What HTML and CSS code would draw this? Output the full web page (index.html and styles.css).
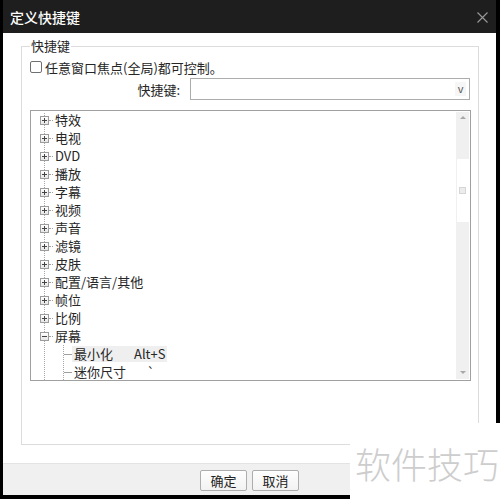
FILE: index.html
```html
<!DOCTYPE html>
<html lang="zh-CN">
<head>
  <meta charset="UTF-8" />
  <title>定义快捷键</title>
  <link rel="stylesheet" href="styles.css">
</head>
<body>
  <div class="window">
    <div class="titlebar">
      <span class="title">定义快捷键</span>
      <span class="close">
        <svg width="11" height="11" viewBox="0 0 11 11"><path d="M0.5 0.5L10.5 10.5M10.5 0.5L0.5 10.5" stroke="#9a9a9a" stroke-width="1.1" fill="none"/></svg>
      </span>
    </div>

    <div class="dialog-body">
      <div class="group">
        <span class="group-title">快捷键</span>

        <label class="check-row"><span class="checkbox"></span>任意窗口焦点(全局)都可控制。</label>

        <div class="hotkey-row">
          <span class="hotkey-label">快捷键:</span>
          <div class="combo"><span class="combo-arrow">v</span></div>
        </div>

        <!-- shortcut tree -->
        <div class="tree">
          <ul class="tree-list">
            <li class="node"><span class="exp plus"></span><span class="dash"></span>特效</li>
            <li class="node"><span class="exp plus"></span><span class="dash"></span>电视</li>
            <li class="node"><span class="exp plus"></span><span class="dash"></span>DVD</li>
            <li class="node"><span class="exp plus"></span><span class="dash"></span>播放</li>
            <li class="node"><span class="exp plus"></span><span class="dash"></span>字幕</li>
            <li class="node"><span class="exp plus"></span><span class="dash"></span>视频</li>
            <li class="node"><span class="exp plus"></span><span class="dash"></span>声音</li>
            <li class="node"><span class="exp plus"></span><span class="dash"></span>滤镜</li>
            <li class="node"><span class="exp plus"></span><span class="dash"></span>皮肤</li>
            <li class="node"><span class="exp plus"></span><span class="dash"></span>配置/语言/其他</li>
            <li class="node"><span class="exp plus"></span><span class="dash"></span>帧位</li>
            <li class="node"><span class="exp plus"></span><span class="dash"></span>比例</li>
            <li class="node"><span class="exp"></span><span class="dash"></span>屏幕</li>
            <li class="leaf"><span class="branch"></span><span class="leaf-text selected"><span class="leaf-name">最小化</span><span>Alt+S</span></span></li>
            <li class="leaf"><span class="branch"></span><span class="leaf-text"><span class="leaf-name">迷你尺寸</span><span>`</span></span></li>
          </ul>
          <div class="scrollbar">
            <span class="sb-arrow up"></span>
            <span class="sb-thumb"><span class="sb-grip"></span></span>
            <span class="sb-arrow down"></span>
          </div>
        </div>
      </div>
    </div>

    <div class="footer">
      <button class="btn">确定</button>
      <button class="btn">取消</button>
    </div>
  </div>

  <div class="watermark">软件技巧</div>
</body>
</html>
```

FILE: styles.css
```css
body {
  background: #000;
  margin: 0;
  padding: 0;
  font-family: "Noto Sans CJK SC", "Noto Sans", sans-serif;
  font-size: 13px;
  color: #262626;
}

.window {
  margin-left: 3px;
  width: 493px;
  height: 495px;
  display: flex;
  flex-direction: column;
}

.titlebar {
  height: 33px;
  background: #1e1e1e;
  display: flex;
  align-items: center;
  justify-content: space-between;
  padding: 0 8px 0 7px;
}

.title {
  color: #fff;
  font-size: 14px;
  font-weight: 500;
}

.close {
  display: flex;
  margin-top: 1px;
}

.dialog-body {
  flex: 1;
  background: #fff;
  padding: 13px 17px 18px 18px;
  display: flex;
  flex-direction: column;
}

.group {
  flex: 1;
  position: relative;
  border: 1px solid #dcdcdc;
  padding: 11px 7px 0 8px;
}

.group-title {
  position: absolute;
  top: -9px;
  left: 8px;
  background: #fff;
  padding: 0 1px;
  line-height: 16px;
}

.check-row {
  display: flex;
  align-items: center;
  height: 18px;
}

.checkbox {
  width: 12px;
  height: 12px;
  box-sizing: border-box;
  border: 1px solid #707070;
  border-radius: 2px;
  margin-right: 3px;
}

.hotkey-row {
  display: flex;
  align-items: center;
  justify-content: flex-end;
  margin-top: 2px;
  margin-right: 1px;
}

.hotkey-label {
  margin-right: 10px;
}

.combo {
  width: 280px;
  height: 22px;
  box-sizing: border-box;
  border: 1px solid #acacac;
  display: flex;
  justify-content: flex-end;
  align-items: center;
  padding-right: 3px;
}

.combo-arrow {
  width: 11px;
  height: 14px;
  line-height: 13px;
  text-align: center;
  font-size: 11px;
  color: #555;
  background: #f6f6f6;
}

.tree {
  margin-top: 10px;
  height: 271px;
  box-sizing: border-box;
  border: 1px solid #a0a0a0;
  display: flex;
}

.tree-list {
  flex: 1;
  list-style: none;
  margin: 0;
  padding: 0;
  overflow: hidden;
  background-image: repeating-linear-gradient(to bottom, #a8a8a8 0 1px, transparent 1px 2px);
  background-size: 1px 100%;
  background-position: 13px 2px;
  background-repeat: no-repeat;
}

.tree-list li {
  height: 18px;
  line-height: 18px;
  display: flex;
  align-items: center;
  white-space: nowrap;
}

.node {
  padding-left: 9px;
}

.exp {
  position: relative;
  width: 9px;
  height: 9px;
  box-sizing: border-box;
  border: 1px solid #9c9c9c;
  background: linear-gradient(#fff, #e6e6e6);
}

.exp::before {
  content: "";
  position: absolute;
  left: 1px;
  top: 3px;
  width: 5px;
  height: 1px;
  background: #444;
}

.exp.plus::after {
  content: "";
  position: absolute;
  left: 3px;
  top: 1px;
  width: 1px;
  height: 5px;
  background: #444;
}

.dash {
  width: 4px;
  border-top: 1px dotted #a0a0a0;
  margin-right: 2px;
}

.leaf {
  padding-left: 33px;
  background-image: repeating-linear-gradient(to bottom, #a8a8a8 0 1px, transparent 1px 2px);
  background-size: 1px 100%;
  background-position: 32px 0;
  background-repeat: no-repeat;
}

.branch {
  width: 8px;
  border-top: 1px solid #a0a0a0;
}

.leaf-text {
  display: flex;
  height: 16px;
  line-height: 16px;
  padding: 0 2px;
}

.leaf-text.selected {
  background: #efefef;
}

.leaf-name {
  margin-right: 21px;
}

.scrollbar {
  width: 13px;
  margin: 1px 1px 1px 0;
  background: #f0f0f0;
  display: flex;
  flex-direction: column;
  align-items: center;
}

.sb-arrow {
  width: 0;
  height: 0;
  border-left: 3px solid transparent;
  border-right: 3px solid transparent;
}

.sb-arrow.up {
  margin-top: 4px;
  border-bottom: 3px solid #a8a8a8;
}

.sb-arrow.down {
  margin-top: auto;
  margin-bottom: 5px;
  border-top: 3px solid #a8a8a8;
}

.sb-thumb {
  margin-top: 40px;
  width: 12px;
  height: 63px;
  background: #fff;
  display: flex;
  align-items: center;
  justify-content: center;
}

.sb-grip {
  width: 5px;
  height: 5px;
  border: 1px solid #d6d6d6;
  background: #ececec;
}

.footer {
  height: 32px;
  box-sizing: border-box;
  background: #f0f0f0;
  border-top: 1px solid #e3e3e3;
  display: flex;
  justify-content: center;
  align-items: flex-start;
  gap: 5px;
  padding-top: 6px;
}

.btn {
  width: 47px;
  height: 21px;
  padding: 0;
  border: 1px solid #adadad;
  border-radius: 2px;
  background: linear-gradient(#fefefe, #f2f2f2);
  font-family: "Noto Sans CJK SC", sans-serif;
  font-size: 13px;
  color: #222;
}

.watermark {
  position: absolute;
  left: 350px;
  top: 423px;
  width: 150px;
  height: 76px;
  background: #fff;
  color: #cdcdcd;
  font-size: 36px;
  font-weight: 300;
  line-height: 80px;
  padding-left: 5px;
  box-sizing: border-box;
}
```
